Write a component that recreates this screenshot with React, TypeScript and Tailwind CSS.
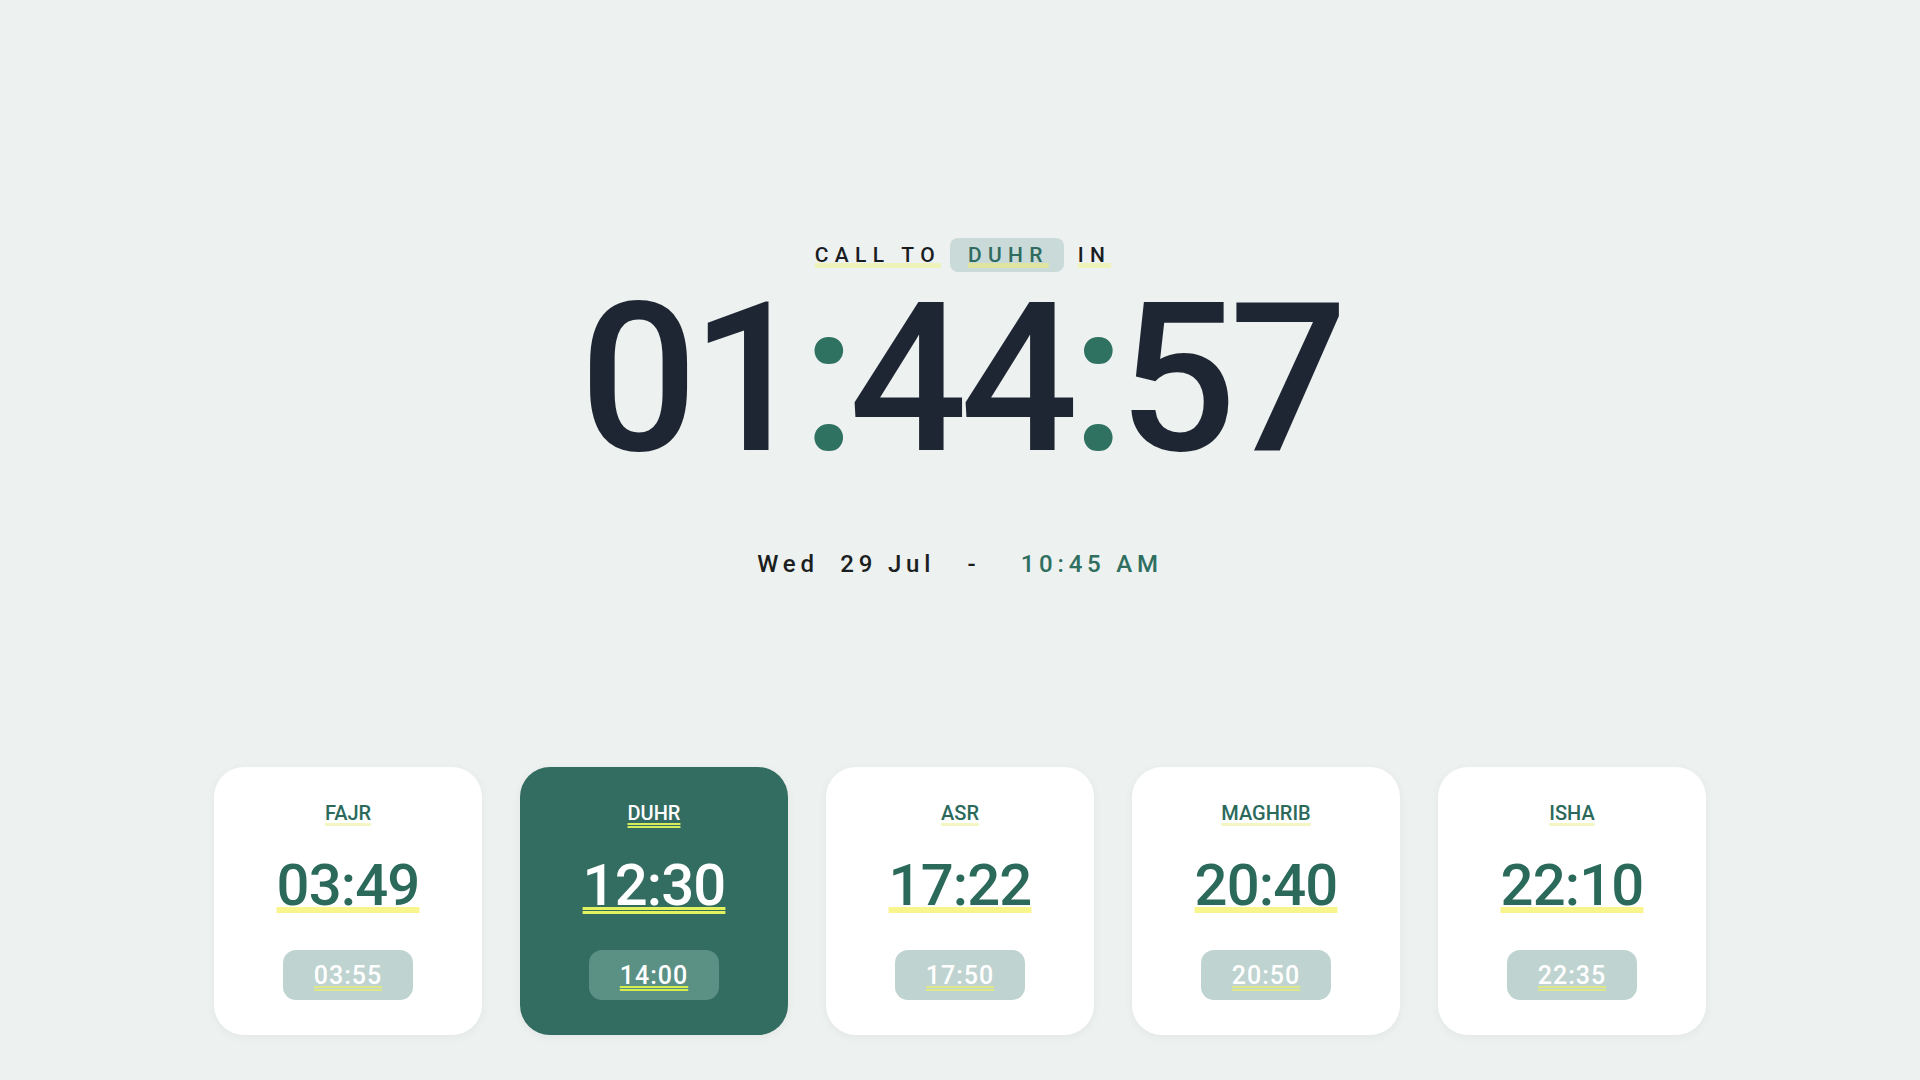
import React from "react";

type Prayer = { name: string; time: string; iqama: string; active?: boolean };

const prayers: Prayer[] = [
  { name: "FAJR", time: "03:49", iqama: "03:55" },
  { name: "DUHR", time: "12:30", iqama: "14:00", active: true },
  { name: "ASR", time: "17:22", iqama: "17:50" },
  { name: "MAGHRIB", time: "20:40", iqama: "20:50" },
  { name: "ISHA", time: "22:10", iqama: "22:35" },
];

function PrayerCard({ p }: { p: Prayer }) {
  return (
    <div
      className={`flex h-[268px] w-[268px] flex-col items-center rounded-[30px] pt-[36px] shadow-[0_2px_10px_rgba(0,0,0,0.05)] ${
        p.active ? "bg-[#336c60] text-white" : "bg-white text-[#2b6a5b]"
      }`}
    >
      {/* name */}
      <span
        className={`text-[20px] font-medium leading-none underline underline-offset-[3px] ${
          p.active
            ? "decoration-double decoration-[2px] decoration-[#d6ec5c]"
            : "decoration-[3px] decoration-[#f3f5c2]"
        }`}
      >
        {p.name}
      </span>

      {/* adhan time */}
      <span
        className={`mt-[33px] text-[58px] font-medium leading-none tracking-[-0.015em] underline underline-offset-[2px] ${
          p.active
            ? "decoration-double decoration-[3px] decoration-[#e2f25e]"
            : "decoration-[6px] decoration-[#f8f58c]"
        }`}
      >
        {p.time}
      </span>

      {/* iqama */}
      <div
        className={`mt-[36px] flex h-[50px] w-[130px] items-center justify-center rounded-[13px] ${
          p.active ? "bg-[#5b9184]" : "bg-[#bfd3d0]"
        }`}
      >
        <span
          className={`text-[25px] font-medium leading-none tracking-[0.04em] text-white underline decoration-double decoration-[2px] underline-offset-[2px] ${
            p.active ? "decoration-[#d3ec4e]" : "decoration-[#dde68a]"
          }`}
        >
          {p.iqama}
        </span>
      </div>
    </div>
  );
}

export default function App() {
  return (
    <div
      className="flex min-h-screen w-full flex-col items-center bg-[#edf1f0] pt-[238px]"
      style={{ fontFamily: "Roboto, 'Noto Sans', sans-serif" }}
    >
      {/* Call to prayer header */}
      <div className="flex h-[34px] items-center pl-[6px] text-[21px] font-medium leading-none tracking-[0.3em] text-[#1a1d1f]">
        <span className="underline decoration-[5px] decoration-[#eef3ba] underline-offset-[1px]">
          CALL TO
        </span>
        <span className="ml-[9px] flex h-[34px] items-center rounded-lg bg-[#c9dad8] pl-[18px] pr-[15px] text-[#2f6b5e]">
          <span className="underline decoration-[5px] decoration-[#dfe4a0] underline-offset-[1px]">
            DUHR
          </span>
        </span>
        <span className="ml-[14px] underline decoration-[5px] decoration-[#eef3ba] underline-offset-[1px]">
          IN
        </span>
      </div>

      {/* Countdown */}
      <div className="mt-[3px] text-[208px] font-medium leading-none tracking-[-0.035em] text-[#1f2633]">
        01<span className="text-[#2f7262]">:</span>44
        <span className="text-[#2f7262]">:</span>57
      </div>

      {/* Date / time */}
      <div className="mt-[69px] whitespace-pre text-[24px] font-medium leading-none tracking-[0.2em] text-[#1c1f21]">
        {"Wed  29 Jul   -   "}
        <span className="ml-[8px] text-[#2f6f60]">10:45 AM</span>
      </div>

      {/* Prayer cards */}
      <div className="mt-[191px] flex gap-[38px]">
        {prayers.map((p) => (
          <PrayerCard key={p.name} p={p} />
        ))}
      </div>
    </div>
  );
}
